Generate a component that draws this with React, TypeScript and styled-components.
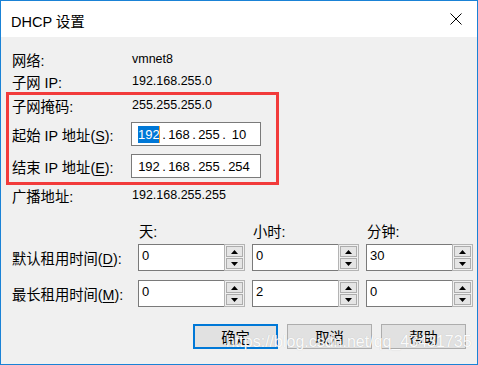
import styled, { createGlobalStyle } from "styled-components";

const GlobalStyle = createGlobalStyle`
  html, body {
    margin: 0;
    padding: 0;
    background: #ffffff;
  }
  * {
    box-sizing: border-box;
  }
`;

const SANS = `"Liberation Sans", "Noto Sans CJK SC", sans-serif`;

const Window = styled.div`
  position: relative;
  width: 478px;
  height: 365px;
  border: 1px solid #1a82d6;
  background: #f0f0f0;
  display: flex;
  flex-direction: column;
  font-family: ${SANS};
  color: #000;
  overflow: hidden;
`;

const TitleBar = styled.div`
  height: 36px;
  background: #ffffff;
  display: flex;
  align-items: center;
  justify-content: space-between;
  padding: 0 15px 0 10px;
`;

const Title = styled.div`
  font-size: 14.5px;
  padding-top: 2px;
`;

const Body = styled.div`
  flex: 1;
  padding: 11px 11px 0 11px;
  display: flex;
  flex-direction: column;
`;

const Row = styled.div<{ $h?: number; $mt?: number }>`
  height: ${(p) => p.$h ?? 22}px;
  margin-top: ${(p) => p.$mt ?? 0}px;
  display: flex;
  align-items: center;
`;

const Label = styled.div`
  width: 119px;
  flex-shrink: 0;
  font-size: 14.3px;
  white-space: nowrap;

  & u {
    text-underline-offset: 2px;
  }
`;

const Value = styled.div`
  font-size: 12.5px;
  padding-left: 1px;
`;

const Highlight = styled.div`
  margin-left: -6px;
  width: 273px;
  border: 3px solid #f23b3b;
  padding: 0 0 4px 3px;
  display: flex;
  flex-direction: column;
`;

const IpBox = styled.div`
  width: 130px;
  height: 24px;
  border: 1px solid #7a7a7a;
  background: #fff;
  display: flex;
  align-items: center;
  padding-left: 6px;
  font-size: 13px;
`;

const Octet = styled.span<{ $selected?: boolean }>`
  width: 22px;
  height: 17px;
  line-height: 17px;
  text-align: center;
  background: ${(p) => (p.$selected ? "#0078d7" : "transparent")};
  color: ${(p) => (p.$selected ? "#fff" : "#000")};
  border-right: ${(p) => (p.$selected ? "1px solid #f4a23a" : "none")};
`;

const Dot = styled.span`
  width: 8px;
  text-align: center;
`;

const LeaseRow = styled.div<{ $h: number; $mt: number }>`
  display: grid;
  grid-template-columns: 119px 107px 107px 107px;
  column-gap: 7px;
  align-items: center;
  height: ${(p) => p.$h}px;
  margin-top: ${(p) => p.$mt}px;
`;

const ColHead = styled.div`
  font-size: 14.3px;
  padding-left: 1px;
`;

const Field = styled.div`
  display: flex;
  height: 27px;
`;

const FieldText = styled.div`
  flex: 1;
  background: #fff;
  border: 1px solid #7a7a7a;
  border-right: none;
  font-size: 13px;
  padding: 3px 0 0 3px;
`;

const SpinBox = styled.div`
  width: 21px;
  border: 1px solid #b4b4b4;
  background: #f0f0f0;
  display: flex;
  flex-direction: column;
  gap: 1px;
  padding: 1px;
`;

const SpinButton = styled.div`
  flex: 1;
  background: #e5e5e5;
  border: 1px solid #adadad;
  display: flex;
  align-items: center;
  justify-content: center;
`;

const ButtonRow = styled.div`
  display: flex;
  justify-content: flex-end;
  gap: 9px;
  margin-top: 17px;
`;

const Button = styled.div<{ $default?: boolean }>`
  width: 85px;
  height: 25px;
  background: #e1e1e1;
  border: ${(p) => (p.$default ? "2px solid #0078d7" : "1px solid #adadad")};
  display: flex;
  align-items: center;
  justify-content: center;
  font-size: 14.3px;
`;

const Watermark = styled.div`
  position: absolute;
  left: 225px;
  top: 332px;
  font-family: ${SANS};
  font-size: 16px;
  color: rgba(255, 255, 255, 0.95);
  text-shadow: 0 0 1px rgba(0, 0, 0, 0.18);
  white-space: nowrap;
  pointer-events: none;
`;

const Close = () => (
  <svg width="12" height="12" viewBox="0 0 12 12">
    <path d="M0.5 0.5 L11.5 11.5 M11.5 0.5 L0.5 11.5" stroke="#000" strokeWidth="1" />
  </svg>
);

const Arrow = ({ up }: { up?: boolean }) => (
  <svg width="7" height="4" viewBox="0 0 7 4">
    <path d={up ? "M3.5 0 L7 4 L0 4 Z" : "M0 0 L7 0 L3.5 4 Z"} fill="#000" />
  </svg>
);

const Spinner = ({ value }: { value: string }) => (
  <Field>
    <FieldText>{value}</FieldText>
    <SpinBox>
      <SpinButton>
        <Arrow up />
      </SpinButton>
      <SpinButton>
        <Arrow />
      </SpinButton>
    </SpinBox>
  </Field>
);

const IpAddress = ({ parts, selected }: { parts: string[]; selected?: number }) => (
  <IpBox>
    {parts.map((p, i) => (
      <span key={i} style={{ display: "contents" }}>
        {i > 0 && <Dot>.</Dot>}
        <Octet $selected={i === selected}>{p}</Octet>
      </span>
    ))}
  </IpBox>
);

export default function App() {
  return (
    <>
      <GlobalStyle />
      <Window>
        <TitleBar>
          <Title>DHCP 设置</Title>
          <Close />
        </TitleBar>
        <Body>
          <Row>
            <Label>网络:</Label>
            <Value>vmnet8</Value>
          </Row>
          <Row>
            <Label>子网 IP:</Label>
            <Value>192.168.255.0</Value>
          </Row>
          <Highlight>
            <Row $h={20}>
              <Label>子网掩码:</Label>
              <Value>255.255.255.0</Value>
            </Row>
            <Row $h={24} $mt={7}>
              <Label>
                起始 IP 地址(<u>S</u>):
              </Label>
              <IpAddress parts={["192", "168", "255", "10"]} selected={0} />
            </Row>
            <Row $h={24} $mt={8}>
              <Label>
                结束 IP 地址(<u>E</u>):
              </Label>
              <IpAddress parts={["192", "168", "255", "254"]} />
            </Row>
          </Highlight>
          <Row $h={20}>
            <Label>广播地址:</Label>
            <Value>192.168.255.255</Value>
          </Row>
          <LeaseRow $h={20} $mt={15}>
            <div />
            <ColHead>天:</ColHead>
            <ColHead>小时:</ColHead>
            <ColHead>分钟:</ColHead>
          </LeaseRow>
          <LeaseRow $h={27} $mt={4}>
            <Label>
              默认租用时间(<u>D</u>):
            </Label>
            <Spinner value="0" />
            <Spinner value="0" />
            <Spinner value="30" />
          </LeaseRow>
          <LeaseRow $h={27} $mt={9}>
            <Label>
              最长租用时间(<u>M</u>):
            </Label>
            <Spinner value="0" />
            <Spinner value="2" />
            <Spinner value="0" />
          </LeaseRow>
          <ButtonRow>
            <Button $default>确定</Button>
            <Button>取消</Button>
            <Button>帮助</Button>
          </ButtonRow>
        </Body>
        <Watermark>https://blog.csdn.net/qq_43431735</Watermark>
      </Window>
    </>
  );
}
